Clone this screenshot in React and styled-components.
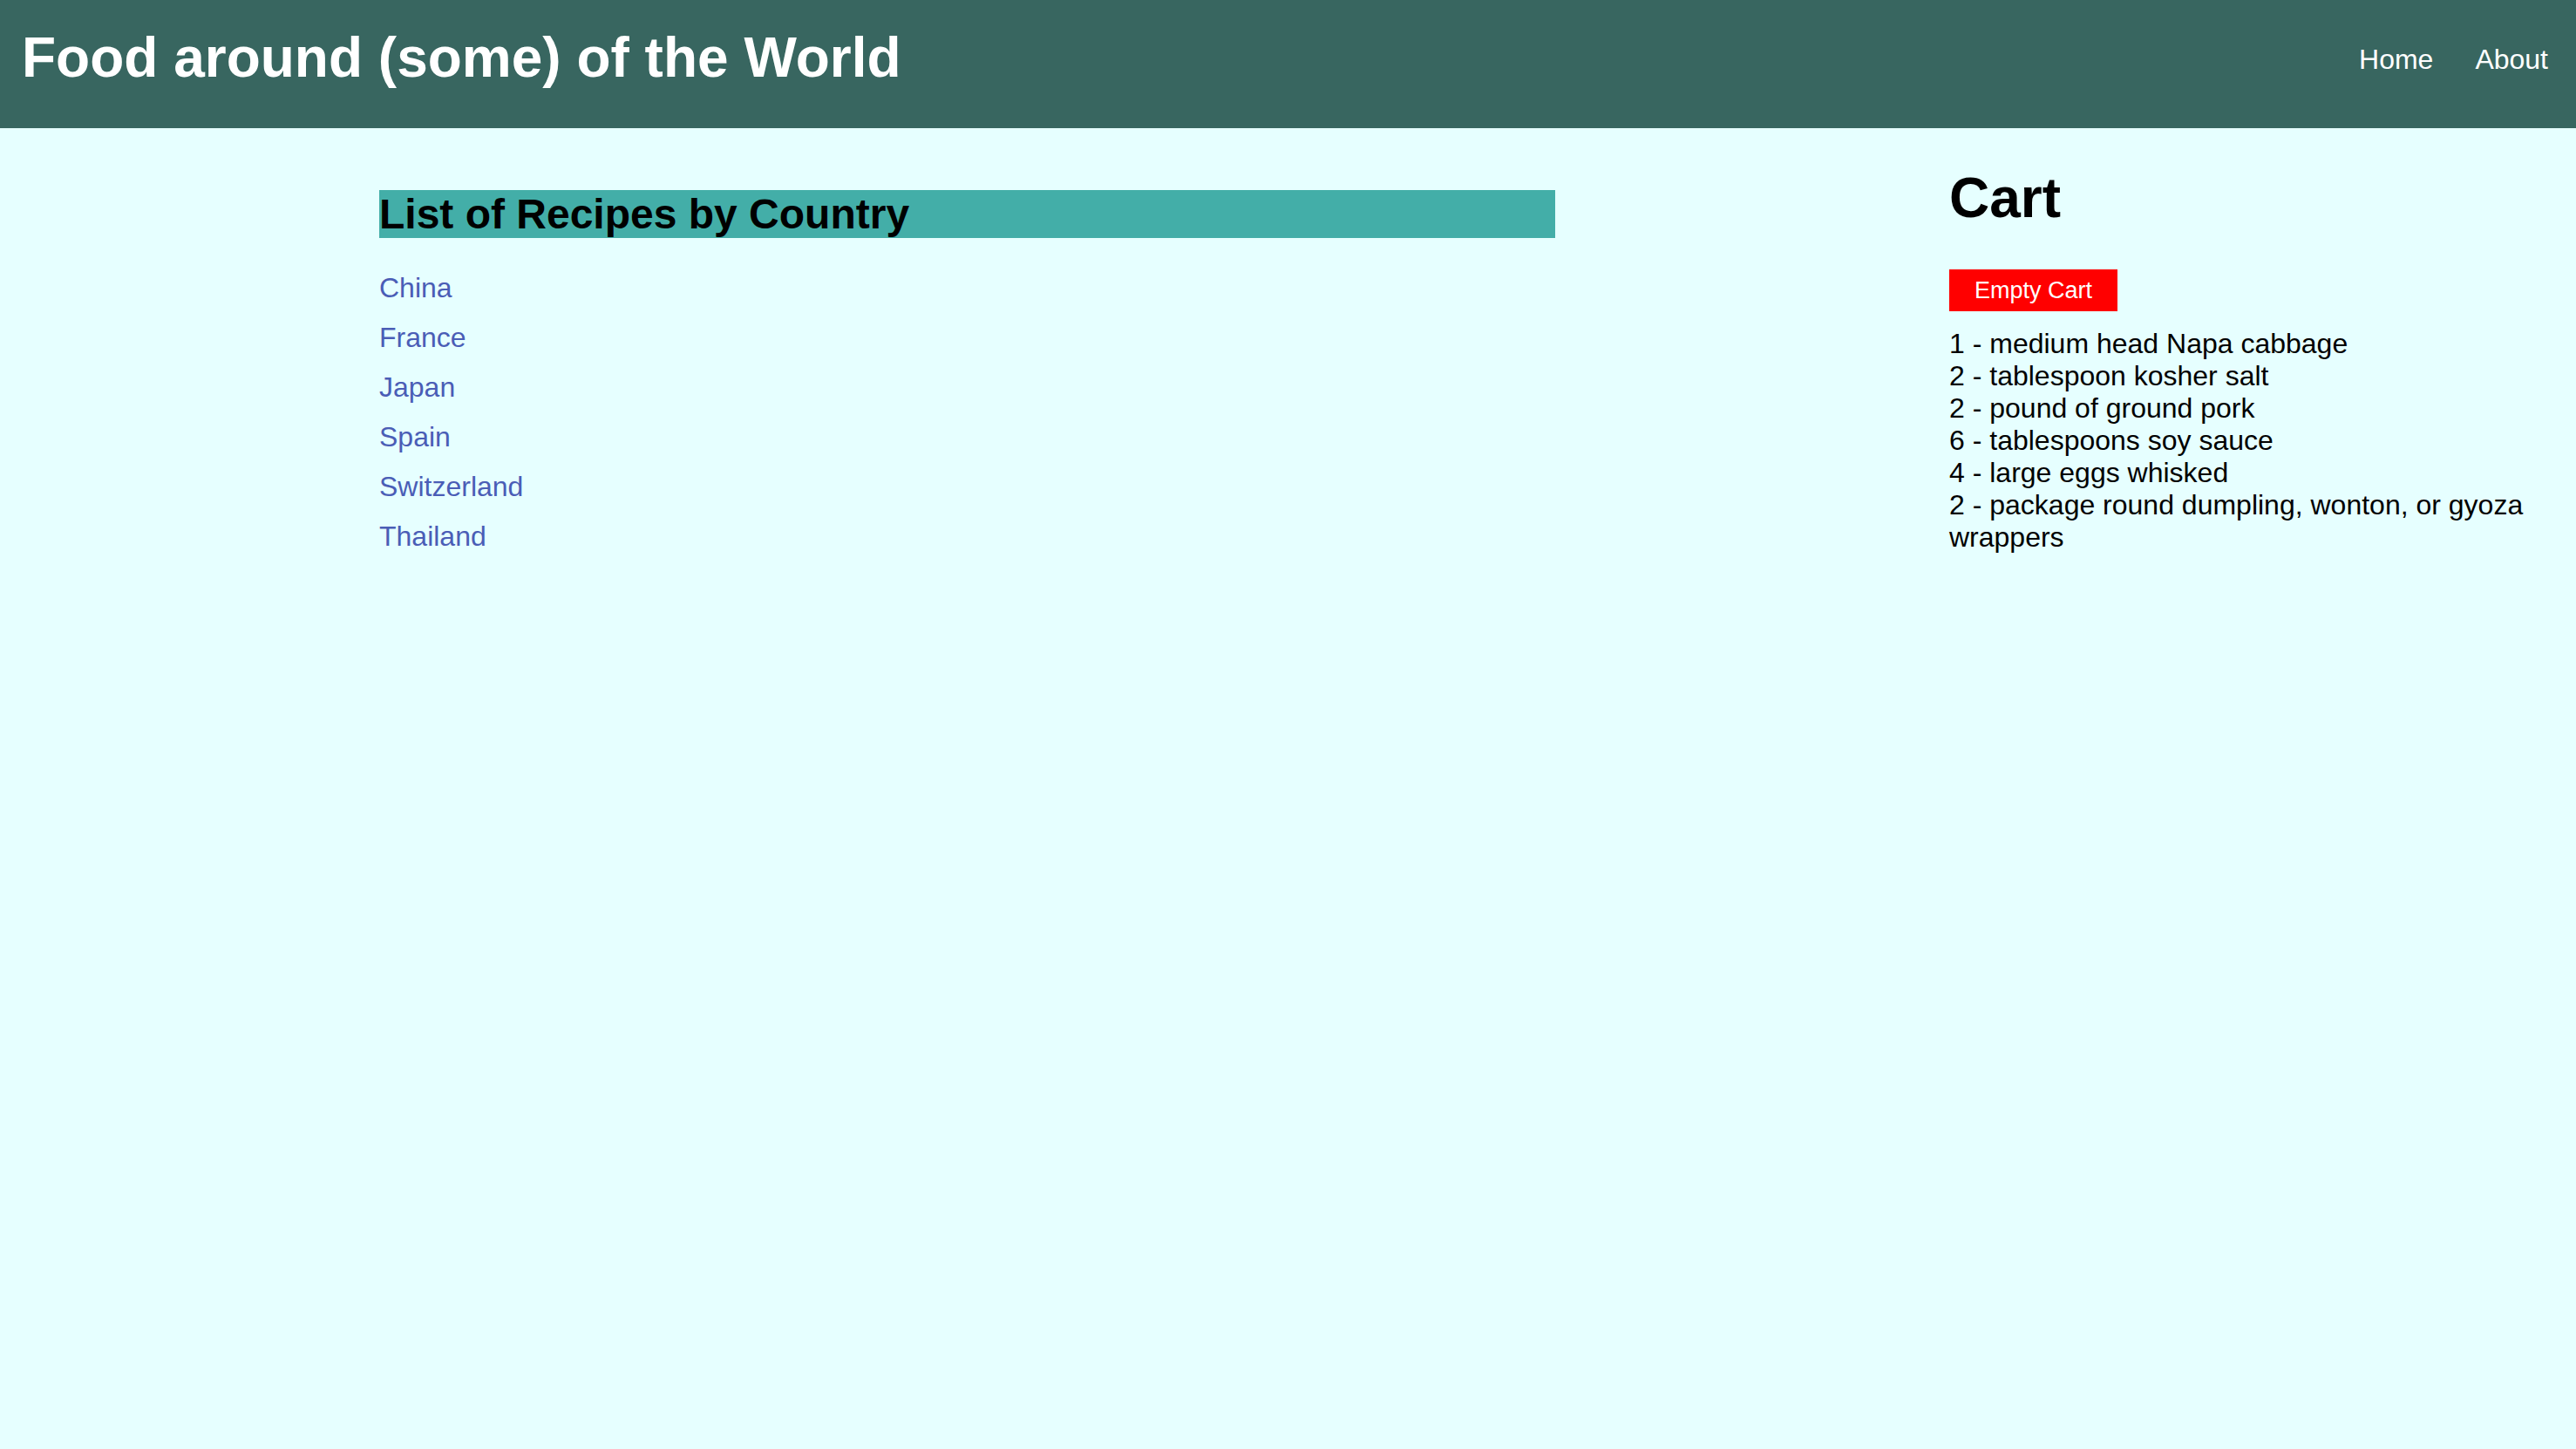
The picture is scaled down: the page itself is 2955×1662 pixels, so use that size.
import React from "react";
import styled, { createGlobalStyle } from "styled-components";

const countries = ["China", "France", "Japan", "Spain", "Switzerland", "Thailand"];

const cartItems = [
  { qty: 1, name: "medium head Napa cabbage" },
  { qty: 2, name: "tablespoon kosher salt" },
  { qty: 2, name: "pound of ground pork" },
  { qty: 6, name: "tablespoons soy sauce" },
  { qty: 4, name: "large eggs whisked" },
  { qty: 2, name: "package round dumpling, wonton, or gyoza wrappers" },
];

const App = () => {
  return (
    <>
      <GlobalStyle />
      <Header>
        <SiteTitle>Food around (some) of the World</SiteTitle>
        <Nav>
          <NavLink href="#">Home</NavLink>
          <NavLink href="#">About</NavLink>
        </Nav>
      </Header>
      <Main>
        <RecipeSection>
          <SectionTitle>List of Recipes by Country</SectionTitle>
          <CountryList>
            {countries.map((c) => (
              <CountryLink key={c} href="#">{c}</CountryLink>
            ))}
          </CountryList>
        </RecipeSection>
        <CartSection>
          <CartTitle>Cart</CartTitle>
          <EmptyButton type="button">Empty Cart</EmptyButton>
          <CartList>
            {cartItems.map((item, i) => (
              <CartItem key={i}>
                {item.qty} - {item.name}
              </CartItem>
            ))}
          </CartList>
        </CartSection>
      </Main>
    </>
  );
};

const GlobalStyle = createGlobalStyle`
  html, body {
    margin: 0;
    padding: 0;
    background: #e6ffff;
    font-family: "Liberation Sans", Arial, sans-serif;
  }
  body {
    min-height: 100vh;
  }
`;

const Header = styled.header`
  height: 147px;
  background-color: #386660;
  display: flex;
  justify-content: space-between;
  align-items: center;
  padding: 0 32px 0 25px;
  box-sizing: border-box;
`;

const SiteTitle = styled.h1`
  margin: 0 0 15px;
  color: #fff;
  font-size: 64px;
  font-weight: 700;
`;

const Nav = styled.nav`
  display: flex;
  gap: 48px;
  padding-bottom: 11px;
`;

const NavLink = styled.a`
  color: #fff;
  text-decoration: none;
  font-size: 32px;
`;

const Main = styled.main`
  display: flex;
  align-items: flex-start;
`;

const RecipeSection = styled.section`
  width: 1349px;
  padding: 32px 0 0 435px;
`;

const SectionTitle = styled.h2`
  margin: 39px 0 39px;
  background-color: #43aea8;
  color: #000;
  font-size: 48px;
  font-weight: 700;
`;

const CountryList = styled.div`
  display: flex;
  flex-direction: column;
  align-items: flex-start;
  gap: 21px;
`;

const CountryLink = styled.a`
  color: #4a5db6;
  text-decoration: none;
  font-size: 32px;
  line-height: 36px;
`;

const CartSection = styled.aside`
  margin-left: 452px;
  width: 685px;
`;

const CartTitle = styled.h1`
  margin: 43px 0 45px;
  font-size: 64px;
  font-weight: 700;
  color: #000;
`;

const EmptyButton = styled.button`
  display: block;
  height: 48px;
  padding: 0 29px;
  border: none;
  background-color: #ff0000;
  color: #fff;
  font-family: "Liberation Sans", Arial, sans-serif;
  font-size: 27px;
  cursor: pointer;
`;

const CartList = styled.div`
  margin-top: 19px;
`;

const CartItem = styled.div`
  font-size: 32px;
  line-height: 37px;
  color: #000;
`;

export default App;
